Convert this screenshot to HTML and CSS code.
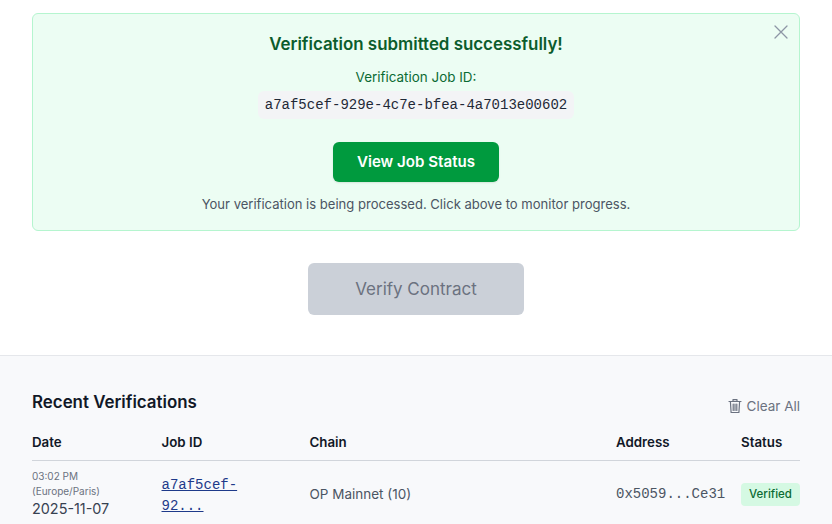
FILE: index.html
```html
<!DOCTYPE html>
<html lang="en">
<head>
    <meta charset="UTF-8">
    <meta name="viewport" content="width=device-width, initial-scale=1.0">
    <title>Verify Contract</title>
    <link rel="stylesheet" href="styles.css">
</head>
<body>
    <main class="formArea">
        <div class="successBox">
            <button class="closeBtn" aria-label="Close">
                <svg width="14" height="14" viewBox="0 0 14 14" fill="none" stroke="currentColor" stroke-width="1.3" stroke-linecap="round">
                    <path d="M1 1l12 12M13 1L1 13"/>
                </svg>
            </button>
            <h2>Verification submitted successfully!</h2>
            <p class="jobLabel">Verification Job ID:</p>
            <code class="jobId">a7af5cef-929e-4c7e-bfea-4a7013e00602</code>
            <a class="statusBtn" href="#">View Job Status</a>
            <p class="hint">Your verification is being processed. Click above to monitor progress.</p>
        </div>
        <button class="verifyBtn" disabled>Verify Contract</button>
    </main>

    <section class="recent">
        <div class="recentHead">
            <h3>Recent Verifications</h3>
            <button class="clearBtn">
                <svg width="14" height="16" viewBox="0 0 14 16" fill="none" stroke="currentColor" stroke-width="1.2" stroke-linecap="round" stroke-linejoin="round">
                    <path d="M1 3.5h12M5 3.2V1.6h4v1.6M2.4 3.5l.7 11h7.8l.7-11M5.2 6v6.5M7 6v6.5M8.8 6v6.5"/>
                </svg>
                Clear All
            </button>
        </div>
        <table>
            <thead>
                <tr>
                    <th class="colDate">Date</th>
                    <th class="colJob">Job ID</th>
                    <th class="colChain">Chain</th>
                    <th class="colAddr">Address</th>
                    <th class="colStatus">Status</th>
                </tr>
            </thead>
            <tbody>
                <tr>
                    <td>
                        <div class="time">03:02 PM</div>
                        <div class="time">(Europe/Paris)</div>
                        <div class="day">2025-11-07</div>
                    </td>
                    <td><a class="jobLink" href="#">a7af5cef-92...</a></td>
                    <td>OP Mainnet (10)</td>
                    <td class="addr">0x5059...Ce31</td>
                    <td><span class="badge">Verified</span></td>
                </tr>
            </tbody>
        </table>
    </section>
</body>
</html>
```

FILE: styles.css
```css
html, body {
    margin: 0;
    height: 524px;
    overflow: hidden;
}

body {
    font-family: Inter, "Noto Sans", Arial, sans-serif;
    background: white;
    color: #111827;
}

.formArea {
    padding: 13px 32px 40px;
    display: flex;
    flex-direction: column;
    align-items: center;
}

.successBox {
    position: relative;
    box-sizing: border-box;
    width: 100%;
    height: 218px;
    padding: 19px 16px 0;
    display: flex;
    flex-direction: column;
    align-items: center;
    background: #ecfdf3;
    border: 1px solid #b5f5cf;
    border-radius: 6px;
    text-align: center;
}

.successBox h2 {
    margin: 0;
    font-size: 16.9px;
    line-height: 22px;
    font-weight: 600;
    color: #0b5c2c;
}

.closeBtn {
    position: absolute;
    top: 11px;
    right: 11px;
    padding: 0;
    display: flex;
    border: none;
    background: none;
    color: #8d96a5;
}

.jobLabel {
    margin: 13px 0 0;
    font-size: 13.45px;
    line-height: 18px;
    color: #0b6b33;
}

.jobId {
    margin-top: 5px;
    padding: 0 7px;
    font-family: "Liberation Mono", monospace;
    font-size: 14px;
    line-height: 28px;
    color: #1f2937;
    background: #f3f4f6;
    border-radius: 6px;
}

.statusBtn {
    margin-top: 23px;
    width: 166px;
    height: 40px;
    line-height: 40px;
    font-size: 15.1px;
    font-weight: 600;
    color: white;
    text-decoration: none;
    background: #009a3e;
    border-radius: 6px;
    box-shadow: 0 1px 2px rgba(0, 0, 0, 0.1);
}

.hint {
    margin: 13px 0 0;
    font-size: 13.05px;
    line-height: 18px;
    color: #4b5563;
}

.verifyBtn {
    margin-top: 32px;
    width: 216px;
    height: 52px;
    font-family: inherit;
    font-size: 17px;
    font-weight: 400;
    color: #6b7280;
    background: #cbd0d8;
    border: none;
    border-radius: 6px;
}

.recent {
    padding: 0 32px;
    height: 169px;
    background: #f8f9fb;
    border-top: 1px solid #e5e7eb;
}

.recentHead {
    padding-top: 35px;
    display: flex;
    justify-content: space-between;
    align-items: flex-start;
}

.recentHead h3 {
    margin: 0;
    font-size: 16.9px;
    line-height: 23px;
    font-weight: 600;
}

.clearBtn {
    margin-top: 5px;
    padding: 0;
    display: flex;
    align-items: center;
    gap: 5px;
    font-family: inherit;
    font-size: 13.5px;
    line-height: 20px;
    color: #6b7280;
    border: none;
    background: none;
}

table {
    width: 100%;
    margin-top: 16px;
    table-layout: fixed;
    border-collapse: collapse;
}

th {
    padding: 0 0 8px;
    text-align: left;
    font-size: 13.3px;
    line-height: 20px;
    font-weight: 600;
    border-bottom: 1px solid #d1d5db;
}

.colDate { width: 129.5px; }
.colJob { width: 148px; }
.colAddr { width: 125px; }
.colStatus { width: 59px; }

td {
    padding: 8px 0 0;
    font-size: 13.5px;
    color: #4b5563;
    vertical-align: middle;
}

.time {
    font-size: 10px;
    line-height: 15px;
    color: #6b7280;
}

.day {
    font-size: 14.4px;
    line-height: 20px;
    color: #374151;
}

.jobLink {
    display: block;
    width: 90px;
    padding-top: 3px;
    font-family: "Liberation Mono", monospace;
    font-size: 14px;
    line-height: 21px;
    color: #1e3a8a;
    overflow-wrap: anywhere;
}

.addr {
    font-family: "Liberation Mono", monospace;
    font-size: 14px;
}

.badge {
    display: block;
    box-sizing: border-box;
    height: 23px;
    line-height: 23px;
    text-align: center;
    font-size: 11.5px;
    font-weight: 500;
    color: #0b6b33;
    background: #d5f9e3;
    border-radius: 4px;
}
```
